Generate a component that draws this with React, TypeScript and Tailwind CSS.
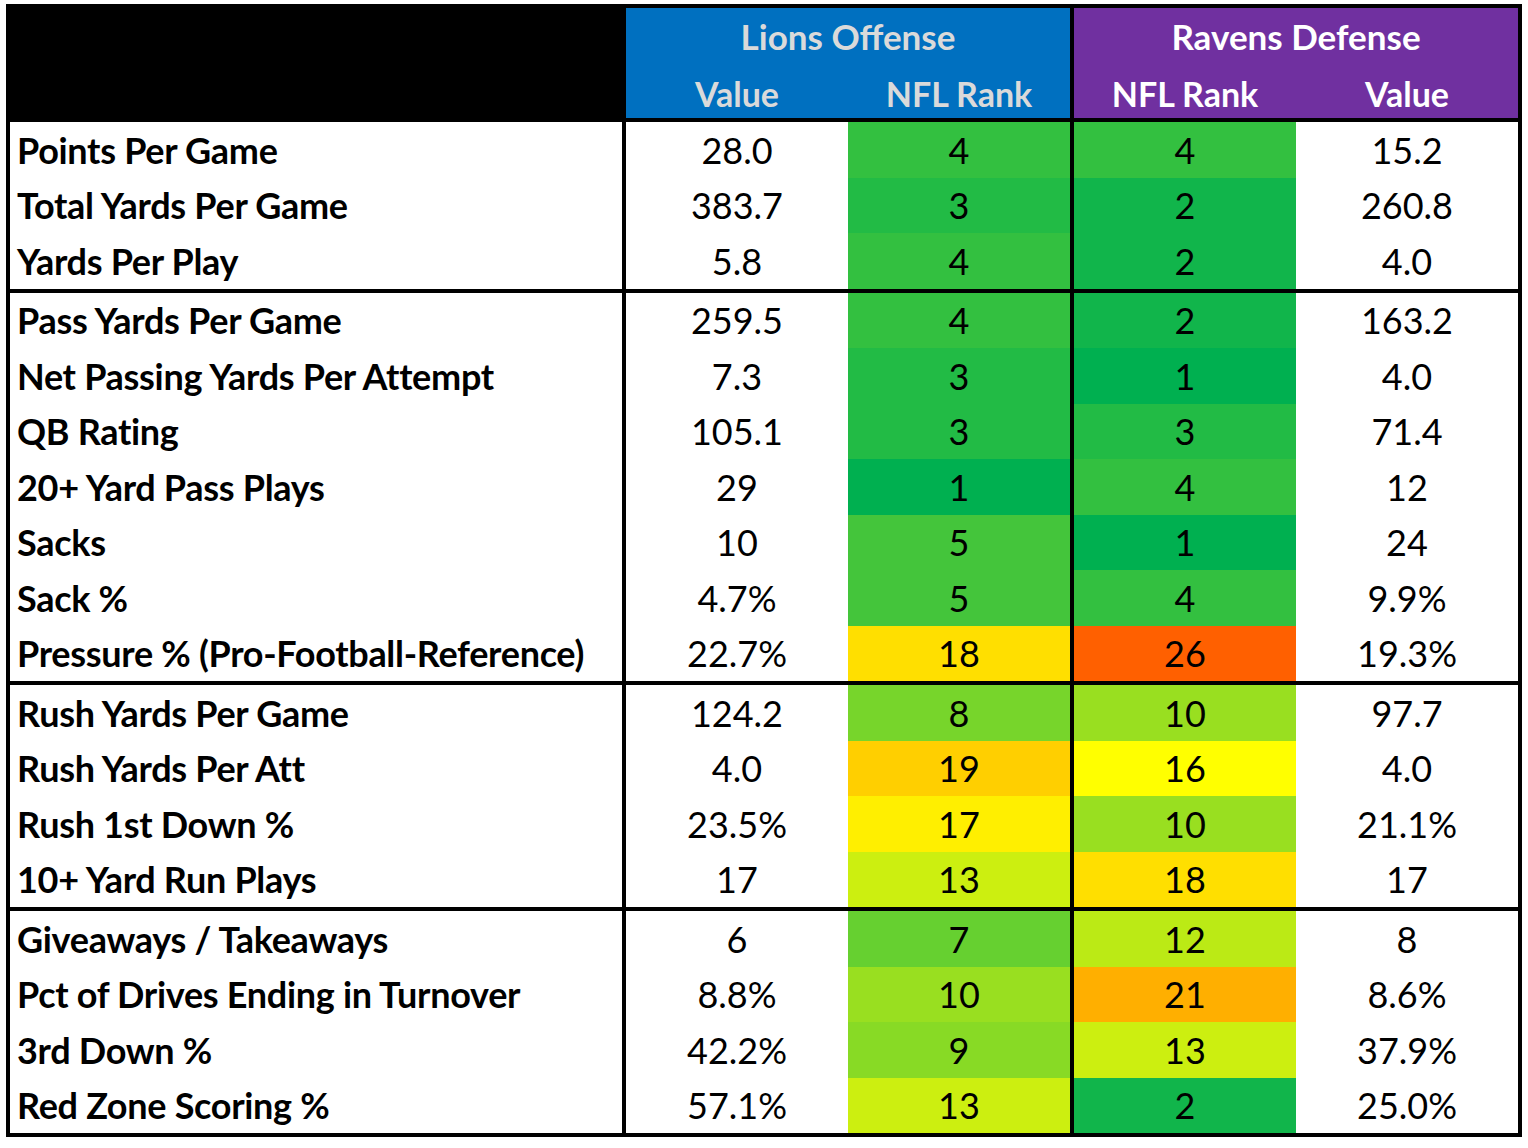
type Row = {
  label: string
  offValue: string
  offRank: number
  defRank: number
  defValue: string
}

const GROUPS: Row[][] = [
  [
    { label: 'Points Per Game', offValue: '28.0', offRank: 4, defRank: 4, defValue: '15.2' },
    { label: 'Total Yards Per Game', offValue: '383.7', offRank: 3, defRank: 2, defValue: '260.8' },
    { label: 'Yards Per Play', offValue: '5.8', offRank: 4, defRank: 2, defValue: '4.0' },
  ],
  [
    { label: 'Pass Yards Per Game', offValue: '259.5', offRank: 4, defRank: 2, defValue: '163.2' },
    { label: 'Net Passing Yards Per Attempt', offValue: '7.3', offRank: 3, defRank: 1, defValue: '4.0' },
    { label: 'QB Rating', offValue: '105.1', offRank: 3, defRank: 3, defValue: '71.4' },
    { label: '20+ Yard Pass Plays', offValue: '29', offRank: 1, defRank: 4, defValue: '12' },
    { label: 'Sacks', offValue: '10', offRank: 5, defRank: 1, defValue: '24' },
    { label: 'Sack %', offValue: '4.7%', offRank: 5, defRank: 4, defValue: '9.9%' },
    { label: 'Pressure % (Pro-Football-Reference)', offValue: '22.7%', offRank: 18, defRank: 26, defValue: '19.3%' },
  ],
  [
    { label: 'Rush Yards Per Game', offValue: '124.2', offRank: 8, defRank: 10, defValue: '97.7' },
    { label: 'Rush Yards Per Att', offValue: '4.0', offRank: 19, defRank: 16, defValue: '4.0' },
    { label: 'Rush 1st Down %', offValue: '23.5%', offRank: 17, defRank: 10, defValue: '21.1%' },
    { label: '10+ Yard Run Plays', offValue: '17', offRank: 13, defRank: 18, defValue: '17' },
  ],
  [
    { label: 'Giveaways / Takeaways', offValue: '6', offRank: 7, defRank: 12, defValue: '8' },
    { label: 'Pct of Drives Ending in Turnover', offValue: '8.8%', offRank: 10, defRank: 21, defValue: '8.6%' },
    { label: '3rd Down %', offValue: '42.2%', offRank: 9, defRank: 13, defValue: '37.9%' },
    { label: 'Red Zone Scoring %', offValue: '57.1%', offRank: 13, defRank: 2, defValue: '25.0%' },
  ],
]

// green (1) -> yellow (16) -> red (32)
const RANK_BG: Record<number, string> = {
  1: 'bg-[#00b050]',
  2: 'bg-[#11b54b]',
  3: 'bg-[#22bb45]',
  4: 'bg-[#33c040]',
  5: 'bg-[#44c53b]',
  7: 'bg-[#66d030]',
  8: 'bg-[#77d52b]',
  9: 'bg-[#88da25]',
  10: 'bg-[#99df20]',
  12: 'bg-[#bbea15]',
  13: 'bg-[#ccef10]',
  16: 'bg-[#ffff00]',
  17: 'bg-[#ffef00]',
  18: 'bg-[#ffdf00]',
  19: 'bg-[#ffcf00]',
  21: 'bg-[#ffaf00]',
  26: 'bg-[#ff6000]',
}

const cell = 'flex h-[55.5px] items-center justify-center text-[36px] leading-none text-black'

function StatRow({ row }: { row: Row }) {
  return (
    <div className="flex">
      <div className="flex h-[55.5px] w-[616px] items-center border-r-4 border-black bg-white pl-[7px] text-[36px] font-bold leading-none tracking-[-0.3px] text-black">
        {row.label}
      </div>
      <div className={`${cell} w-[222px] bg-white`}>{row.offValue}</div>
      <div className={`${cell} w-[226px] border-r-4 border-black ${RANK_BG[row.offRank]}`}>{row.offRank}</div>
      <div className={`${cell} w-[222px] ${RANK_BG[row.defRank]}`}>{row.defRank}</div>
      <div className={`${cell} w-[222px] bg-white`}>{row.defValue}</div>
    </div>
  )
}

export default function App() {
  return (
    <div className="min-h-screen bg-white pl-[6px] pt-[4px] font-['Lato',sans-serif]">
      <div className="w-[1516px] border-4 border-black bg-black">
        {/* header */}
        <div className="flex h-[110px]">
          <div className="w-[616px] bg-black" />
          <div className="flex w-[444px] flex-col bg-[#0070c0] font-bold text-[#dadada]">
            <div className="flex h-[56px] items-center justify-center text-[35px] leading-none">
              Lions Offense
            </div>
            <div className="flex flex-1 pt-[5px] text-[34px] leading-none">
              <div className="flex w-[222px] items-center justify-center">Value</div>
              <div className="flex w-[222px] items-center justify-center">NFL Rank</div>
            </div>
          </div>
          <div className="w-[4px] bg-black" />
          <div className="flex w-[444px] flex-col bg-[#7030a0] font-bold text-white">
            <div className="flex h-[56px] items-center justify-center text-[35px] leading-none">
              Ravens Defense
            </div>
            <div className="flex flex-1 pt-[5px] text-[34px] leading-none">
              <div className="flex w-[222px] items-center justify-center">NFL Rank</div>
              <div className="flex w-[222px] items-center justify-center">Value</div>
            </div>
          </div>
        </div>

        {GROUPS.map((group, gi) => (
          <div key={gi} className="border-t-4 border-black">
            {group.map((row) => (
              <StatRow key={row.label} row={row} />
            ))}
          </div>
        ))}
      </div>
    </div>
  )
}
